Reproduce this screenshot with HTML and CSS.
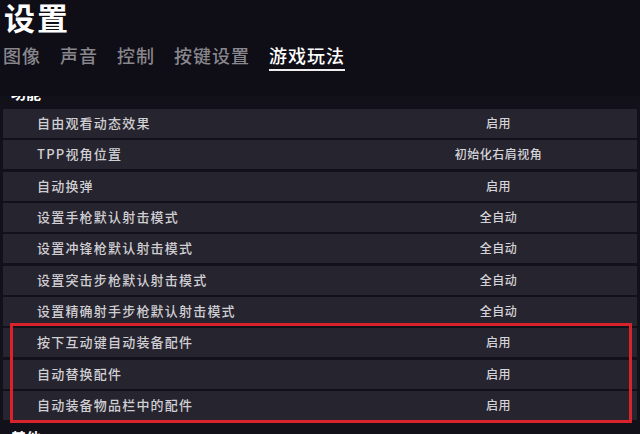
FILE: index.html
```html
<!DOCTYPE html>
<html lang="zh-CN">
<head>
    <meta charset="UTF-8">
    <title>设置</title>
    <link rel="stylesheet" href="styles.css">
</head>
<body>
<div class="page">
    <div class="head">
        <h1 class="title">设置</h1>
        <div class="tabs">
            <span class="tab">图像</span>
            <span class="tab">声音</span>
            <span class="tab">控制</span>
            <span class="tab">按键设置</span>
            <span class="tab active">游戏玩法</span>
        </div>
    </div>
    <div class="viewport">
        <div class="list">
            <h2 class="section">功能</h2>
            <div class="row"><span class="label">自由观看动态效果</span><span class="value">启用</span></div>
            <div class="row"><span class="label">TPP视角位置</span><span class="value">初始化右肩视角</span></div>
            <div class="row"><span class="label">自动换弹</span><span class="value">启用</span></div>
            <div class="row"><span class="label">设置手枪默认射击模式</span><span class="value">全自动</span></div>
            <div class="row"><span class="label">设置冲锋枪默认射击模式</span><span class="value">全自动</span></div>
            <div class="row"><span class="label">设置突击步枪默认射击模式</span><span class="value">全自动</span></div>
            <div class="row"><span class="label">设置精确射手步枪默认射击模式</span><span class="value">全自动</span></div>
            <div class="group marked">
                <div class="row"><span class="label">按下互动键自动装备配件</span><span class="value">启用</span></div>
                <div class="row"><span class="label">自动替换配件</span><span class="value">启用</span></div>
                <div class="row"><span class="label">自动装备物品栏中的配件</span><span class="value">启用</span></div>
            </div>
            <h2 class="section">其他</h2>
        </div>
    </div>
</div>
</body>
</html>
```

FILE: styles.css
```css
*{margin: 0; padding: 0; box-sizing: border-box;}
html, body{
    width: 640px;
    height: 434px;
    overflow: hidden;
}
body{
    background: #121019;
    font-family: "Noto Sans CJK SC", "Noto Sans", sans-serif;
    color: #d2d1d6;
}
.page{
    height: 434px;
    display: flex;
    flex-direction: column;
}
.head{
    height: 96px;
    flex: none;
    background: #0f0d16;
    padding: 0 0 0 4px;
}
.title{
    font-size: 31px;
    font-weight: 700;
    line-height: 34px;
    color: #fff;
    letter-spacing: 2px;
}
.tabs{
    display: flex;
    gap: 19px;
    margin-top: 9px;
    margin-left: -1px;
}
.tab{
    font-size: 18px;
    line-height: 24px;
    letter-spacing: 1px;
    color: #88878d;
    font-weight: 500;
}
.tab.active{
    color: #fff;
    border-bottom: 2px solid #eee;
    padding-bottom: 2px;
}
.viewport{
    flex: 1;
    overflow: hidden;
}
.list{
    margin-top: -13px;
    padding: 0 3px;
}
.section{
    font-size: 15px;
    font-weight: 700;
    line-height: 20px;
    color: #fff;
    padding-left: 8px;
    margin-bottom: 6px;
}
.row{
    height: 29px;
    margin-bottom: 2.33px;
    padding-bottom: 2px;
    background: #26242e;
    display: flex;
    align-items: center;
}
.label{
    flex: 1;
    padding-left: 34px;
    font-size: 13px;
    font-weight: 500;
    letter-spacing: 1.2px;
    color: #d0cfd4;
}
.value{
    width: 277px;
    text-align: center;
    font-size: 12px;
    font-weight: 500;
    letter-spacing: 0.5px;
    color: #d4d3d8;
}
.group{
    position: relative;
    margin-bottom: 8px;
}
.group .row:last-child{
    margin-bottom: 0;
}
.marked::after{
    content: "";
    position: absolute;
    top: -5px;
    bottom: -3px;
    left: 7px;
    right: 5px;
    border: 3px solid #d8232c;
}
```
